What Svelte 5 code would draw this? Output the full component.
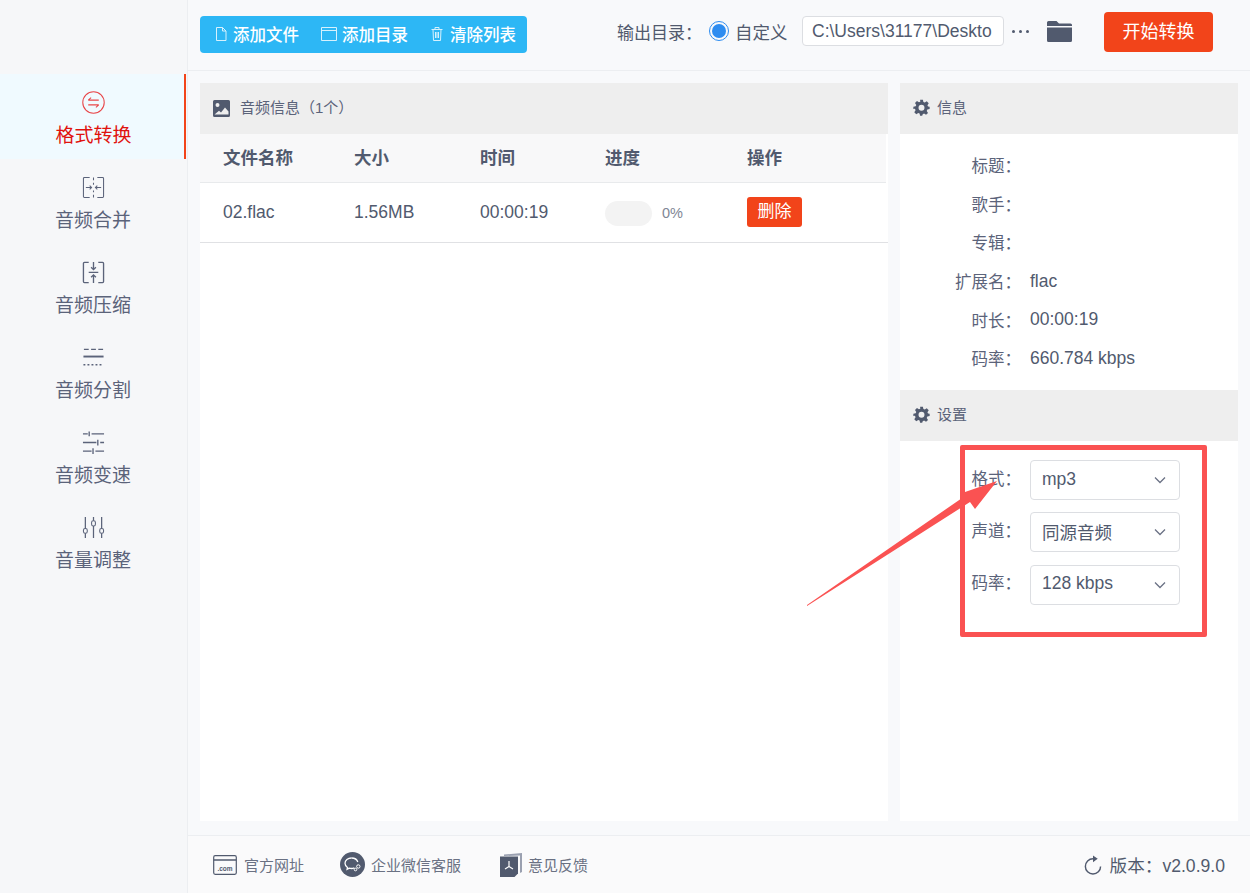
<script>
  const nav = [
    { key: 'convert', label: '格式转换', active: true },
    { key: 'merge', label: '音频合并' },
    { key: 'compress', label: '音频压缩' },
    { key: 'split', label: '音频分割' },
    { key: 'speed', label: '音频变速' },
    { key: 'volume', label: '音量调整' }
  ];
  const info = [
    ['标题\uFF1A', ''], ['歌手\uFF1A', ''], ['专辑\uFF1A', ''],
    ['扩展名\uFF1A', 'flac'], ['时长\uFF1A', '00:00:19'], ['码率\uFF1A', '660.784 kbps']
  ];
  const settings = [['格式\uFF1A', 'mp3'], ['声道\uFF1A', '同源音频'], ['码率\uFF1A', '128 kbps']];
</script>

{#snippet gear()}
  <svg class="gear" viewBox="0 0 24 24"><path fill-rule="evenodd" d="M10 1h4l.7 3.2 1.9.8 2.8-1.8 2.8 2.8-1.8 2.8.8 1.9L23.5 11v3.2l-3.3.7-.8 1.9 1.8 2.8-2.8 2.8-2.8-1.8-1.9.8L13 23.5h-3l-.7-3.1-1.9-.8-2.8 1.8-2.8-2.8 1.8-2.8-.8-1.9L.5 14.200V11l3.300-.7.8-1.900-1.800-2.800 2.800-2.800 2.800 1.800 1.900-.8zM12 8.200a4.200 4.200 0 1 0 0 8.400 4.200 4.200 0 0 0 0-8.400z"/></svg>
{/snippet}

<div class="app">
  <aside class="side">
    {#each nav as n}
      <div class="nav" class:active={n.active}>
        <svg class="nav-ic" viewBox="0 0 24 24" fill="none" stroke="currentColor" stroke-width="1.100">
          {#if n.key === 'convert'}
            <circle cx="12" cy="12" r="11.200"/>
            <path d="M6.500 9.500h11M6.500 9.500l3-2.600M17.500 14.500h-11M17.500 14.500l-3 2.600"/>
          {:else if n.key === 'merge'}
            <path d="M8 1.500H2.500a1 1 0 0 0-1 1v19a1 1 0 0 0 1 1H8M16 1.500h5.500a1 1 0 0 1 1 1v19a1 1 0 0 1-1 1H16M12 1.500v3M12 7v2M12 15v2M12 19.500v3"/>
            <path d="M4 12h6M8 10l2 2-2 2M20 12h-6M16 10l-2 2 2 2"/>
          {:else if n.key === 'compress'}
            <path stroke-width="1.400" d="M7 1.500H2.500a1 1 0 0 0-1 1v19a1 1 0 0 0 1 1H7M17 1.500h4.500a1 1 0 0 1 1 1v19a1 1 0 0 1-1 1H17"/>
            <path stroke-width="1.400" d="M12 1v7.500M9.500 6.500l2.500 2.500 2.500-2.500M7 11.800h10M12 23v-8.500M9.500 17l2.500-2.500 2.500 2.500"/>
          {:else if n.key === 'split'}
            <path stroke-width="1.300" d="M2 3.500h5M9.500 3.500h5M17 3.500h5"/>
            <path stroke-width="2" d="M1.500 11h21"/>
            <path stroke-width="1.500" stroke-dasharray="2 2.200" d="M1.500 19.500h21"/>
          {:else if n.key === 'speed'}
            <path stroke-width="1.400" d="M1 3h5M10 3h13M7.500 .5v5M1 12h14M19 12h4M16.500 9v6M1 21h9M14 21h9M11.500 18v6"/>
          {:else}
            <path stroke-width="1.300" d="M3.500 1v12M3.500 18v5M12 1v4M12 10.500V23M20.500 1v12M20.500 18v5"/>
            <rect x="1.500" y="13" width="4" height="5" rx="1.800"/>
            <rect x="10" y="5" width="4" height="5.500" rx="1.800"/>
            <rect x="18.500" y="13" width="4" height="5" rx="1.800"/>
          {/if}
        </svg>
        <span>{n.label}</span>
      </div>
    {/each}
  </aside>

  <div class="main">
    <header class="top">
      <div class="btns">
        <span class="btn">
          <svg viewBox="0 0 14 16" fill="none" stroke="currentColor"><path d="M2.500 1.500h6l3.500 3.500v9.500h-9.500zM8.500 1.500V5H12"/></svg>添加文件
        </span>
        <span class="btn tight">
          <svg class="wide" viewBox="1 0 18 16" fill="none" stroke="currentColor"><path d="M1.500 14.500V1.500h15v13zM1.500 4.500h15"/></svg>添加目录
        </span>
        <span class="btn loose">
          <svg viewBox="0 0 14 16" fill="none" stroke="currentColor"><path d="M1.500 3.500h11M5 3.500V1.500h4v2M3 3.500l.5 11h7l.5-11M5.500 6v6M7 6v6M8.500 6v6"/></svg>清除列表
        </span>
      </div>
      <div class="out">
        <span class="out-label">输出目录&#xFF1A;</span>
        <span class="radio"><i></i></span>
        <span class="custom">自定义</span>
        <span class="path">C:\Users\31177\Deskto</span>
        <span class="dots"><i></i><i></i><i></i></span>
        <svg class="folder" viewBox="0 0 25 21"><path d="M1.500 0h8l2.500 2.500h11.500A1.500 1.500 0 0 1 25 4v1H0V1.500A1.500 1.500 0 0 1 1.500 0zM0 6.500h25v13a1.500 1.500 0 0 1-1.500 1.500h-22A1.500 1.500 0 0 1 0 19.500z"/></svg>
        <span class="start">开始转换</span>
      </div>
    </header>

    <div class="content">
      <section class="files">
        <h3 class="head">
          <svg class="pic" viewBox="0 0 17 17"><path fill-rule="evenodd" d="M1.500 0h14A1.500 1.500 0 0 1 17 1.500v14a1.500 1.500 0 0 1-1.500 1.500h-14A1.500 1.500 0 0 1 0 15.500v-14A1.500 1.500 0 0 1 1.500 0zM4.500 3a2 2 0 1 0 0 4 2 2 0 0 0 0-4zM1.500 14.500h14v-3L12 7.500l-4 5-2-1.800z"/></svg>
          音频信息&#xFF08;1个&#xFF09;
        </h3>
        <div class="row thead">
          <span>文件名称</span><span>大小</span><span>时间</span><span>进度</span><span>操作</span>
        </div>
        <div class="row tbody">
          <span>02.flac</span><span>1.56MB</span><span>00:00:19</span>
          <span class="prog"><i></i><em>0%</em></span>
          <span class="cell"><b class="del">删除</b></span>
        </div>
      </section>

      <section class="panel">
        <h3 class="head gearhead">{@render gear()}信息</h3>
        <div class="info">
          {#each info as [k, v]}
            <div class="kv"><label>{k}</label><span>{v}</span></div>
          {/each}
        </div>
        <h3 class="head gearhead">{@render gear()}设置</h3>
        <div class="set">
          {#each settings as [k, v]}
            <div class="kv sel-row">
              <label>{k}</label>
              <div class="select">
                <span>{v}</span>
                <svg viewBox="0 0 12 8" fill="none" stroke="currentColor" stroke-width="1.300"><path d="M1 1.500l5 5 5-5"/></svg>
              </div>
            </div>
          {/each}
        </div>
      </section>
    </div>

    <footer class="foot">
      <span class="link first">
        <svg class="f1" viewBox="0 0 24 20" fill="none" stroke="currentColor" stroke-width="1.200"><rect x=".7" y=".7" width="22.600" height="18.600" rx="1.500"/><path d="M.7 5h22.600" stroke-width="1.500"/><text x="12" y="15.500" font-size="6.500" font-weight="700" fill="currentColor" stroke="none" text-anchor="middle" font-family="Liberation Sans, sans-serif">.com</text></svg>
        官方网址
      </span>
      <span class="link second">
        <svg class="f2" viewBox="0 0 25 25"><circle cx="12.500" cy="12.500" r="12.500" fill="currentColor"/><path d="M11.500 6C7.900 6 5 8.400 5 11.300c0 1.700 1 3.200 2.500 4.200l-.4 1.800 2.200-1.100c.7.200 1.400.3 2.200.3 1 0 2-.2 2.900-.6" fill="none" stroke="#fff" stroke-width="1.300"/><path d="M11.500 6c3 0 5.600 1.700 6.300 4" fill="none" stroke="#fff" stroke-width="1.300"/><circle cx="18.300" cy="14.500" r="1.700" fill="none" stroke="#fff"/><circle cx="15.500" cy="17.500" r="1.300" fill="none" stroke="#fff"/></svg>
        企业微信客服
      </span>
      <span class="link third">
        <svg class="f3" viewBox="0 0 24 24"><path d="M5 1.500 23 0v19l-2 1V2.500L5 3z" fill="#9aa0b0"/><path d="M1 3.500h18v17l-3.500 3.500H1z" fill="currentColor"/><path d="M10 8v5.500M10 13.500l-4 2.500M10 13.500l4 2.500" stroke="#fff" stroke-width="1.200" fill="none"/></svg>
        意见反馈
      </span>
      <span class="ver">
        <svg viewBox="0 0 20 20" fill="none" stroke="currentColor" stroke-width="1.500"><path d="M10.500 3.500A8 8 0 1 0 18.500 11.500"/><path d="M10.500 0v7l5-3.500z" fill="currentColor" stroke="none"/></svg>
        版本&#xFF1A;v2.0.9.0
      </span>
    </footer>
  </div>

  <div class="mark"></div>
  <svg class="arrow" viewBox="0 0 1250 893"><polygon points="807,606 807,605 965,496 965,492 997,481 975,509 970,502" fill="#fa5252"/></svg>
</div>

<style>
  :global(body) { margin: 0; }
  .app {
    position: relative;
    display: flex;
    width: 1250px;
    height: 893px;
    overflow: hidden;
    background: #f8f9fb;
    color: #515a6e;
    font-family: "Liberation Sans", "Noto Sans CJK SC", sans-serif;
    font-size: 16px;
  }
  .side {
    box-sizing: border-box;
    width: 188px;
    flex: none;
    padding-top: 74px;
    background: #f6f7f9;
    border-right: 1px solid #eceef1;
  }
  .nav {
    box-sizing: border-box;
    height: 85px;
    margin-right: 1px;
    padding-top: 17px;
    display: flex;
    flex-direction: column;
    align-items: center;
    font-size: 19px;
    line-height: 28px;
    color: #5b637a;
  }
  .nav.active {
    background: #f0faff;
    color: #e0120e;
    border-right: 2px solid #f2441a;
    margin-right: 1px;
    padding-left: 3px;
  }
  .nav-ic { width: 23px; height: 23px; margin-bottom: 8px; color: #5b637a; }
  .nav.active .nav-ic { color: #e8474a; }
  .main { flex: 1; display: flex; flex-direction: column; min-width: 0; }
  .top {
    box-sizing: border-box;
    height: 71px;
    flex: none;
    display: flex;
    align-items: center;
    justify-content: space-between;
    padding: 0 37px 0 12px;
    border-bottom: 1px solid #eceef1;
  }
  .btns {
    display: flex;
    align-items: center;
    gap: 22px;
    height: 37px;
    margin-top: -2px;
    padding: 0 11px 0 14px;
    background: #2db7f5;
    border-radius: 4px;
    color: #fff;
    font-size: 16.500px;
    font-weight: 500;
  }
  .btn { display: flex; align-items: center; gap: 5px; }
  .btn.tight { gap: 3px; }
  .btn.loose { gap: 6px; }
  .btn svg { width: 14px; height: 16px; color: #d6f1fd; }
  .btn svg.wide { width: 18px; height: 16px; }
  .out { display: flex; align-items: center; margin-top: -8px; }
  .out-label { font-size: 17px; width: 92px; white-space: nowrap; }
  .radio {
    box-sizing: border-box;
    width: 20px;
    height: 20px;
    display: flex;
    align-items: center;
    justify-content: center;
    border: 1px solid #2d8cf0;
    border-radius: 50%;
    margin-right: 6px;
  }
  .radio i { width: 14px; height: 14px; border-radius: 50%; background: #2d8cf0; }
  .custom { font-size: 17.500px; width: 67px; }
  .path {
    box-sizing: border-box;
    width: 202px;
    height: 30px;
    line-height: 28px;
    padding-left: 9px;
    background: #fff;
    border: 1px solid #dcdee2;
    border-radius: 4px;
    font-size: 17.500px;
    white-space: nowrap;
    overflow: hidden;
  }
  .dots { display: flex; gap: 4px; margin: 0 18px 0 8px; }
  .dots i { width: 3px; height: 3px; border-radius: 50%; background: #515a6e; }
  .folder { width: 25px; height: 21px; fill: #515a6e; margin-right: 32px; }
  .start {
    width: 109px;
    height: 40px;
    margin-top: 2px;
    line-height: 40px;
    text-align: center;
    background: #f2441a;
    border-radius: 4px;
    color: #fff;
    font-size: 18px;
  }
  .content {
    flex: 1;
    min-height: 0;
    display: flex;
    gap: 12px;
    padding: 12px 12px 14px;
  }
  .files { flex: none; width: 688px; background: #fff; }
  .panel { flex: 1; background: #fff; }
  .head {
    height: 51px;
    margin: 0;
    padding-bottom: 4px;
    box-sizing: border-box;
    display: flex;
    align-items: center;
    padding-left: 13px;
    background: #eeeeee;
    font-size: 15px;
    font-weight: 400;
    color: #5b637a;
  }
  .pic { width: 17px; height: 17px; fill: #515a6e; margin-right: 10px; margin-top: 4px; }
  .gear { width: 17px; height: 17px; fill: #515a6e; margin-right: 7px; margin-top: 2px; }
  .row { display: grid; grid-template-columns: 131px 126px 125px 142px 1fr; padding-left: 23px; align-items: center; }
  .thead {
    height: 49px;
    padding-bottom: 3px;
    box-sizing: border-box;
    background: #f8f8f9;
    border-bottom: 1px solid #e8eaec;
    font-size: 17.500px;
    font-weight: 700;
    margin-right: 2px;
  }
  .tbody { height: 59px; border-bottom: 1px solid #e0e1e4; font-size: 17.500px; }
  .prog { display: flex; align-items: center; gap: 10px; }
  .prog i { width: 47px; height: 25px; border-radius: 13px; background: #f3f3f3; margin-top: 1px; }
  .prog em { font-style: normal; font-size: 14.500px; color: #808695; }
  .cell { display: flex; }
  .del {
    display: block;
    width: 55px;
    height: 30px;
    line-height: 30px;
    text-align: center;
    background: #f2441a;
    border-radius: 3px;
    color: #fff;
    font-weight: 400;
    font-size: 17px;
    margin-top: -1px;
  }
  .info { height: 256px; box-sizing: border-box; padding-top: 12px; }
  .kv { display: flex; align-items: center; height: 38.600px; font-size: 17.500px; gap: 9px; }
  .kv label { width: 121px; text-align: right; flex: none; font-size: 16.500px; color: #5b637a; white-space: nowrap; }
  .set { padding-top: 19px; display: flex; flex-direction: column; gap: 12.400px; }
  .sel-row { height: 40px; }
  .sel-row label { margin-top: -5px; }
  .select {
    box-sizing: border-box;
    width: 150px;
    height: 40px;
    display: flex;
    align-items: center;
    justify-content: space-between;
    padding: 0 13px 2px 11px;
    border: 1px solid #dcdee2;
    border-radius: 4px;
    font-size: 17.500px;
  }
  .select svg { width: 12px; height: 8px; color: #6b7285; margin-top: 2px; }
  .foot {
    box-sizing: border-box;
    height: 58px;
    flex: none;
    display: flex;
    align-items: center;
    padding: 0 25px;
    background: #fafafb;
    border-top: 1px solid #eceef1;
    font-size: 15px;
    color: #6a7183;
  }
  .link { display: flex; align-items: center; gap: 7px; }
  .link svg { color: #515a6e; }
  .f1 { width: 24px; height: 20px; }
  .f2 { width: 25px; height: 25px; }
  .f3 { width: 24px; height: 24px; }
  .second { margin-left: 36px; gap: 6px; }
  .third { margin-left: 38px; gap: 5px; }
  .ver { margin-left: auto; display: flex; align-items: center; gap: 8px; font-size: 17.600px; color: #515a6e; }
  .ver svg { width: 19px; height: 20px; }
  .mark {
    position: absolute;
    left: 960px;
    top: 445px;
    width: 247px;
    height: 192px;
    box-sizing: border-box;
    border: 5px solid #fa5252;
    border-radius: 2px;
  }
  .arrow { position: absolute; inset: 0; width: 1250px; height: 893px; pointer-events: none; }
</style>
